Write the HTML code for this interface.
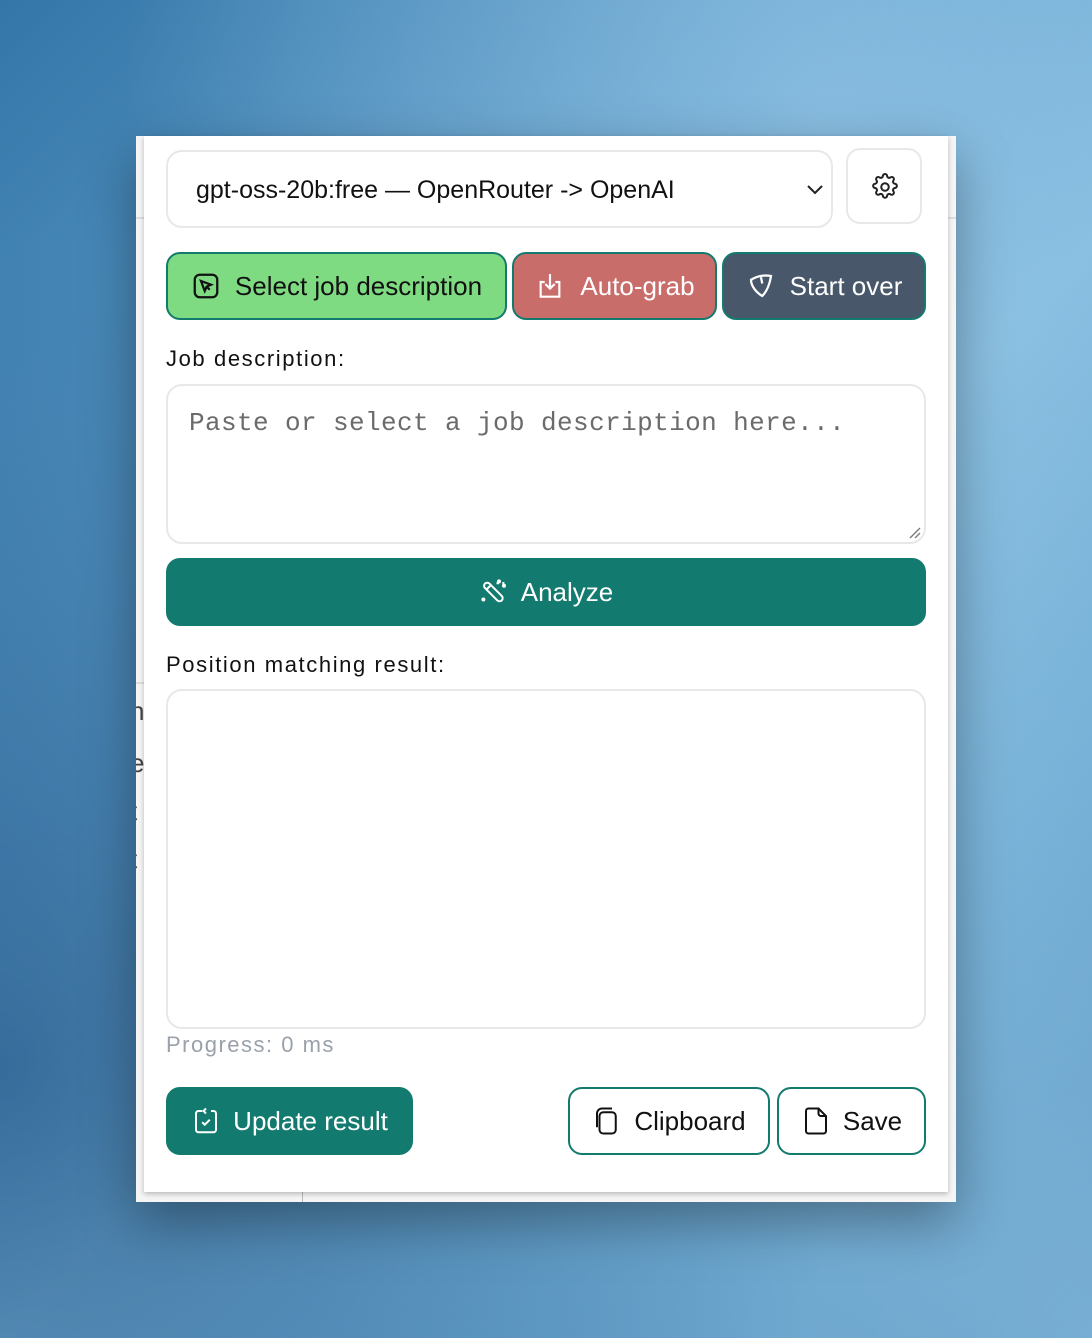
<!DOCTYPE html>
<html><head><meta charset="utf-8"><style>
*{box-sizing:border-box;margin:0;padding:0}
body{width:1092px;height:1338px;overflow:hidden;position:relative;font-family:"Liberation Sans",sans-serif;
background:linear-gradient(135deg,#3476a8 0%,#5e9ecb 35%,#7db8dc 55%,#66a5cf 75%,#4a86b6 100%);}
.bg{position:absolute;inset:0;background:radial-gradient(ellipse at 75% 10%,rgba(160,205,235,.6),transparent 60%),radial-gradient(ellipse at 0% 80%,rgba(25,75,125,.65),transparent 55%),radial-gradient(ellipse at 100% 100%,rgba(150,200,230,.6),transparent 50%)}
.page{position:absolute;left:136px;top:136px;width:820px;height:1066px;background:#f5f5f5;box-shadow:0 20px 50px rgba(0,0,0,.35);overflow:hidden}
.line1{position:absolute;left:0;right:0;top:81px;height:2px;background:#ddd}
.line2{position:absolute;left:0;width:10px;top:546px;height:2px;background:#ddd}
.ghost{position:absolute;left:-6px;font-size:26px;color:#444}
.vl{position:absolute;left:166px;top:1056px;width:1px;height:10px;background:#bbb}
.panel{position:absolute;left:144px;top:136px;width:804px;height:1056px;background:#fff;box-shadow:0 2px 5px rgba(0,0,0,.25)}
.abs{position:absolute}
.sel{left:22px;top:14px;width:667px;height:78px;border:2px solid #e8e8e8;border-radius:16px;font-size:25px;color:#111;padding:24px 0 0 28px}
.gear{left:702px;top:12px;width:76px;height:76px;border:2px solid #e8e8e8;border-radius:14px}
.btn{top:116px;height:68px;border:2px solid #137a6e;border-radius:14px;font-size:26px;display:flex;align-items:center;justify-content:center;gap:14px}
.lbl{font-size:22px;color:#111;left:22px;letter-spacing:1.6px}
.ta{left:22px;border:2px solid #e8e8e8;border-radius:16px;width:760px}
.mono{font-family:"Liberation Mono",monospace;font-size:26px;color:#6b6b6b;letter-spacing:.4px}
</style></head><body><div class="bg"></div>
<div class="page"><div class="line1"></div><div class="line2"></div>
<div class="ghost" style="top:560px">n</div><div class="ghost" style="top:612px">e</div><div class="ghost" style="top:660px">t</div><div class="ghost" style="top:708px">t</div>
<div class="vl"></div></div>
<div class="panel">
<div class="abs sel">gpt-oss-20b:free — OpenRouter -&gt; OpenAI
<svg class="abs" style="right:6px;top:30px" width="20" height="14" viewBox="0 0 20 14"><path d="M3 4l7 7 7-7" fill="none" stroke="#222" stroke-width="2"/></svg></div>
<div class="abs gear"><svg style="position:absolute;left:22px;top:22px" width="30" height="30" viewBox="0 0 24 24" fill="none" stroke="#222" stroke-width="1.6"><path d="M10.3 3.3a1.7 1.7 0 013.4 0 1.7 1.7 0 002.6 1.1 1.7 1.7 0 012.4 2.4 1.7 1.7 0 001.1 2.6 1.7 1.7 0 010 3.4 1.7 1.7 0 00-1.1 2.6 1.7 1.7 0 01-2.4 2.4 1.7 1.7 0 00-2.6 1.1 1.7 1.7 0 01-3.4 0 1.7 1.7 0 00-2.6-1.1 1.7 1.7 0 01-2.4-2.4 1.7 1.7 0 00-1.1-2.6 1.7 1.7 0 010-3.4 1.7 1.7 0 001.1-2.6 1.7 1.7 0 012.4-2.4 1.7 1.7 0 002.6-1.1z"/><circle cx="12" cy="12" r="3"/></svg></div>
<div class="abs btn" style="left:22px;width:341px;background:#7fdb82;color:#111"><svg width="30" height="30" viewBox="0 0 24 24" fill="none" stroke="#111" stroke-width="1.8"><rect x="3" y="3" width="18" height="18" rx="4"/><path d="M8 8l3 8 1.5-3.5L16 11z"/><path d="M12.5 12.5L15 15"/></svg>Select job description</div>
<div class="abs btn" style="left:368px;width:205px;background:#c96d6b;color:#fff"><svg width="32" height="32" viewBox="0 0 24 24" fill="none" stroke="#fff" stroke-width="1.6"><path d="M8 9H5v11h14V9h-3"/><path d="M12 3v11M8.5 10.5L12 14l3.5-3.5"/></svg>Auto-grab</div>
<div class="abs btn" style="left:578px;width:204px;background:#485769;color:#fff"><svg width="30" height="30" viewBox="0 0 24 24" fill="none" stroke="#fff" stroke-width="1.8"><path d="M4 7c5-3 11-4 16-3-1 6-3 12-7 16C8 17 4 12 4 7z"/><path d="M12 5l1 5"/></svg>Start over</div>
<div class="abs lbl" style="top:210px">Job description:</div>
<div class="abs ta" style="top:248px;height:160px"><div class="abs mono" style="left:21px;top:22px">Paste or select a job description here...</div>
<svg class="abs" style="right:2px;bottom:2px" width="14" height="14"><path d="M2 12L12 2M7 12l5-5" stroke="#777" stroke-width="1.3"/></svg></div>
<div class="abs btn" style="left:22px;width:760px;top:422px;height:68px;background:#127a6e;border-color:#127a6e;color:#fff;font-size:26px;gap:12px"><svg width="30" height="30" viewBox="0 0 24 24" fill="none" stroke="#fff" stroke-width="1.6"><rect x="2" y="9.5" width="19" height="5" rx="2.5" transform="rotate(45 11.5 12)"/><path d="M6 10l3-3"/><circle cx="16" cy="3.5" r=".8"/><circle cx="20" cy="7" r=".8"/><circle cx="3.5" cy="18" r=".8"/><path d="M14 5h2M19.5 4v2"/></svg>Analyze</div>
<div class="abs lbl" style="top:516px">Position matching result:</div>
<div class="abs ta" style="top:553px;height:340px"></div>
<div class="abs" style="left:22px;top:896px;font-size:22px;color:#9aa1ab;letter-spacing:1.5px">Progress: 0 ms</div>
<div class="abs btn" style="left:22px;width:247px;top:951px;background:#127a6e;color:#fff;gap:12px"><svg width="30" height="30" viewBox="0 0 24 24" fill="none" stroke="#fff" stroke-width="1.6"><path d="M9 4H6a2 2 0 00-2 2v13a2 2 0 002 2h12a2 2 0 002-2V6a2 2 0 00-2-2h-2"/><path d="M12 2l-2 2 2 2M9 13l2 2 4-4"/></svg>Update result</div>
<div class="abs btn" style="left:424px;width:202px;top:951px;background:#fff;color:#111;gap:12px"><svg width="30" height="30" viewBox="0 0 24 24" fill="none" stroke="#111" stroke-width="1.6"><rect x="6" y="5" width="13" height="17" rx="3"/><path d="M4 17V6a4 4 0 014-4h8"/></svg>Clipboard</div>
<div class="abs btn" style="left:633px;width:149px;top:951px;background:#fff;color:#111;gap:12px"><svg width="30" height="30" viewBox="0 0 24 24" fill="none" stroke="#111" stroke-width="1.6"><path d="M6 2h8l6 6v12a2 2 0 01-2 2H6a2 2 0 01-2-2V4a2 2 0 012-2z"/><path d="M14 2v4a2 2 0 002 2h4"/></svg>Save</div>
</div>
</body></html>
